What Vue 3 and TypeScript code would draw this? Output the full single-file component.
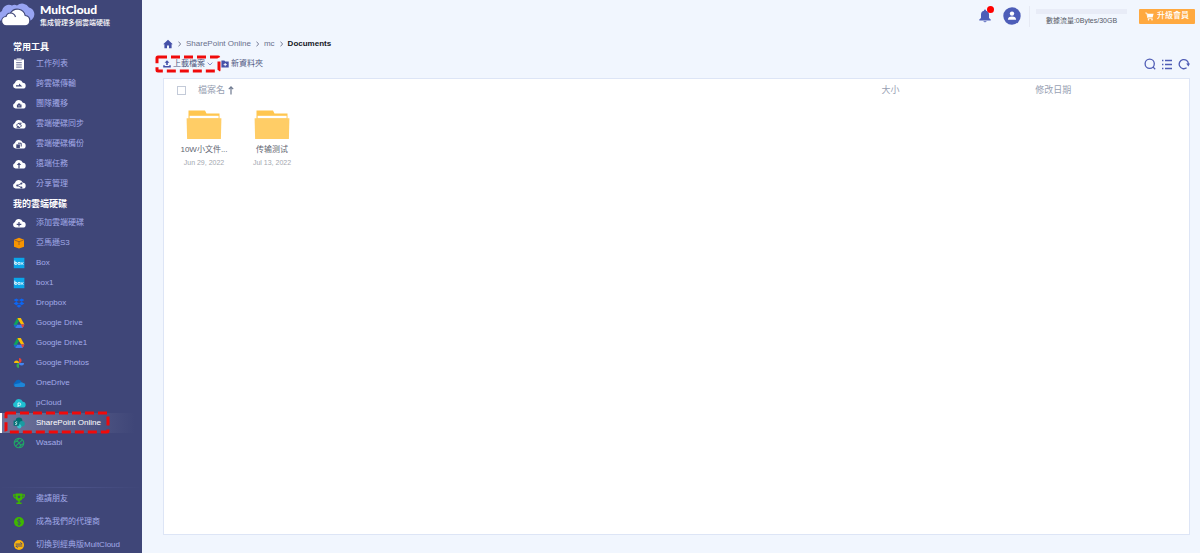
<script setup lang="ts">
interface Shape {
  d: string
  fill?: string
  stroke?: string
  w?: number
}
interface Item {
  label: string
  icon: Shape[]
  active?: boolean
}

const bg = '#3f4678'
const cloud: Shape = {
  d: 'M3.6 11.6A2.9 2.9 0 0 1 2.9 6A4.2 4.2 0 0 1 10.8 5.8A2.9 2.9 0 0 1 10.8 11.6Z',
  fill: '#fff',
}
const line = (d: string, stroke = bg, w = 1): Shape => ({ d, stroke, w })
const solid = (d: string, fill = bg): Shape => ({ d, fill })

const boxIcon: Shape[] = [
  solid('M1.8 1.8H12.4V12.2H1.8Z', '#0ba5e9'),
  line('M2.8 4.6V8.4M2.8 7.4A1.1 1.1 0 1 0 5 7.4A1.1 1.1 0 1 0 2.8 7.4M5.9 7.4A1.1 1.1 0 1 0 8.1 7.4A1.1 1.1 0 1 0 5.9 7.4M8.8 6.2L11.3 8.8M11.3 6.2L8.8 8.8', '#fff', 0.9),
]
const driveIcon: Shape[] = [
  solid('M5.2 2H8.8L12.4 8.6H8.9Z', '#fbbc04'),
  solid('M5.2 2L7 5.2L3.3 12L1.6 8.8Z', '#0fa45c'),
  solid('M5.2 8.6H12.4L10.7 12H3.3Z', '#3b7ded'),
  solid('M1.6 8.8L3.3 12L5.1 8.7Z', '#1967d2'),
  solid('M12.4 8.6L10.7 12L8.9 8.6Z', '#ea4335'),
  solid('M7 5.3L8.8 8.6H5.2Z', bg),
]

const tools: Item[] = [
  {
    label: '工作列表',
    icon: [
      solid('M2 2.4H4.6V1.4H9.4V2.4H12V12.4H2Z', '#fff'),
      line('M4.2 3H9.8', bg, 0.6),
      line('M4.2 5.7H9.8M4.2 7.9H9.8M4.2 10.1H9.8', bg, 0.8),
    ],
  },
  { label: '跨雲碟傳輸', icon: [cloud, solid('M4 9.6V8.3H7V6.6L10.3 9.6Z')] },
  { label: '團隊遷移', icon: [cloud, solid('M4.9 10.4V7.4H6V6.6H8.2V7.4H9.5V10.4Z'), line('M6 8.9H8.4', '#fff', 0.5)] },
  { label: '雲端硬碟同步', icon: [cloud, line('M4.9 8.8A2.2 2.2 0 0 1 8.4 6.7M9.2 8A2.2 2.2 0 0 1 5.7 10.1M8.9 5.6V7.3H7.2M5.2 11.1V9.5H6.8')] },
  { label: '雲端硬碟備份', icon: [cloud, solid('M4.3 7.4H7.9V11H4.3Z'), line('M6 6.2H9.2V9.5')] },
  { label: '遠端任務', icon: [cloud, solid('M7 5.5L9.2 8H7.6V11.6H6.4V8H4.8Z')] },
  { label: '分享管理', icon: [cloud, line('M9.3 6.6L5.2 8.5L9.3 10.4', bg, 0.8), solid('M8.4 6.5A1 1 0 1 0 10.4 6.5A1 1 0 1 0 8.4 6.5M4.2 8.5A1 1 0 1 0 6.2 8.5A1 1 0 1 0 4.2 8.5M8.4 10.4A1 1 0 1 0 10.4 10.4A1 1 0 1 0 8.4 10.4')] },
]

const drives: Item[] = [
  { label: '添加雲端硬碟', icon: [cloud, line('M7 6V10.6M4.7 8.3H9.3', bg, 1.2)] },
  {
    label: '亞馬遜S3',
    icon: [
      solid('M7 1.8L12 3.7V10.8L7 12.6L2 10.8V3.7Z', '#f79400'),
      line('M2.4 4L7 5.7L11.6 4M7 5.7V9', '#8a5a34', 0.8),
    ],
  },
  { label: 'Box', icon: boxIcon },
  { label: 'box1', icon: boxIcon },
  {
    label: 'Dropbox',
    icon: [solid('M4.3 2.4L7 4.1L4.3 5.8L1.6 4.1ZM9.7 2.4L12.4 4.1L9.7 5.8L7 4.1ZM4.3 5.8L7 7.5L4.3 9.2L1.6 7.5ZM9.7 5.8L12.4 7.5L9.7 9.2L7 7.5ZM7 8.5L9.6 10.1L7 11.8L4.4 10.1Z', '#0d66f2')],
  },
  { label: 'Google Drive', icon: driveIcon },
  { label: 'Google Drive1', icon: driveIcon },
  {
    label: 'Google Photos',
    icon: [
      solid('M7 7V2A2.5 2.5 0 0 1 7 7Z', '#ea4335'),
      solid('M7 7H2A2.5 2.5 0 0 1 7 7Z', '#fbbc04'),
      solid('M7 7V12A2.5 2.5 0 0 1 7 7Z', '#34a853'),
      solid('M7 7H12A2.5 2.5 0 0 1 7 7Z', '#4285f4'),
    ],
  },
  {
    label: 'OneDrive',
    icon: [
      solid('M4 10.8A2.4 2.4 0 0 1 3 6.2A3.4 3.4 0 0 1 9.4 5.8L8 10.8Z', '#0a66c0'),
      solid('M3.6 11A2 2 0 0 1 2.6 8.2L7.5 7.2A3 3 0 0 1 11.2 7A2 2 0 0 1 11.2 11Z', '#1d86d8'),
    ],
  },
  {
    label: 'pCloud',
    icon: [
      { d: cloud.d, fill: '#1fbfd2' },
      line('M6 11V7H7.4A1.3 1.3 0 0 1 7.4 9.6H6', '#d9fbff', 0.9),
    ],
  },
  {
    label: 'SharePoint Online',
    active: true,
    icon: [
      solid('M3.6 5A3.4 3.4 0 1 1 10.4 5A3.4 3.4 0 1 1 3.6 5', '#036c70'),
      solid('M7.2 7.8A2.8 2.8 0 1 1 12.8 7.8A2.8 2.8 0 1 1 7.2 7.8', '#1a9ba1'),
      solid('M5.2 10.4A2.1 2.1 0 1 1 9.4 10.4A2.1 2.1 0 1 1 5.2 10.4', '#37c6d0'),
      solid('M1.6 4.6H6.8V9.8H1.6Z', '#027478'),
      line('M5.2 6A1 .7 0 1 0 4.2 7.2A1 .7 0 1 1 3.2 8.4', '#fff', 0.8),
    ],
  },
  {
    label: 'Wasabi',
    icon: [
      line('M2.2 7A4.8 4.8 0 1 1 11.8 7A4.8 4.8 0 1 1 2.2 7M2.4 6.6L5 4.8L7.2 6.8L10.4 3.8M11.6 7.4L9 9.2L6.8 7.2L3.6 10.2M7 2.4L5 4.8M7 11.6L9 9.2', '#1fa866', 1.1),
    ],
  },
]

const extras: Item[] = [
  {
    label: '邀請朋友',
    icon: [
      solid('M3.6 1.6H10.4V5.4A3.4 3.4 0 0 1 3.6 5.4ZM6.2 8H7.8V10.4H9.6V12H4.4V10.4H6.2Z', '#3fb800'),
      line('M3.8 2.9H1.6A3 3 0 0 0 4.4 6.3M10.2 2.9H12.4A3 3 0 0 1 9.6 6.3', '#3fb800', 1.1),
      solid('M7 3L7.6 4.2L8.8 4.4L7.9 5.2L8.1 6.4L7 5.8L5.9 6.4L6.1 5.2L5.2 4.4L6.4 4.2Z'),
    ],
  },
  {
    label: '成為我們的代理商',
    icon: [
      solid('M2 7A5 5 0 1 1 12 7A5 5 0 1 1 2 7', '#3fb800'),
      line('M8.5 5.4A1.5 1.2 0 1 0 7 7A1.5 1.2 0 1 1 5.5 8.6M7 3.4V10.6', bg, 0.8),
    ],
  },
  {
    label: '切換到經典版MultCloud',
    icon: [
      solid('M2 7A5 5 0 1 1 12 7A5 5 0 1 1 2 7', '#fbb40c'),
      line('M3.6 6.1H10.2L8.4 4.2M10.4 8H3.8L5.6 9.8', bg, 0.9),
    ],
  },
]

const groups = [
  { title: '常用工具', items: tools },
  { title: '我的雲端硬碟', items: drives },
]

const folders = [
  { name: '10W小文件...', date: 'Jun 29, 2022' },
  { name: '传输测试', date: 'Jul 13, 2022' },
]
</script>

<template>
  <div class="app">
    <aside class="sidebar">
      <a class="brand" href="#">
        <svg class="logo" viewBox="0 0 36 26" aria-hidden="true">
          <path d="M3 19A6 6 0 0 1 2 8A7 7 0 0 1 12 2.5A5.500 5.500 0 0 1 17 2.500A8 8 0 0 1 29 4.500A7 7 0 0 1 32 16.500L28 19Z" fill="#98a4f2" />
          <path d="M6.500 22.800A4.600 4.600 0 0 1 6 13.500A5 5 0 0 1 10.500 10A8 8 0 0 1 25.200 12.500A5.200 5.200 0 0 1 25.500 22.800Z" fill="#fff" stroke="#3f4678" stroke-width="1.2" />
          <path d="M10.500 10A5.500 5.500 0 0 1 15.500 14" fill="none" stroke="#3f4678" stroke-width="1.2" />
        </svg>
        <span class="brand-text">
          <strong>MultCloud</strong>
          <small>集成管理多個雲端硬碟</small>
        </span>
      </a>

      <nav class="nav">
        <section v-for="group in groups" :key="group.title">
          <h2>{{ group.title }}</h2>
          <ul>
            <li v-for="item in group.items" :key="item.label">
              <a href="#" class="item" :class="{ active: item.active }">
                <svg class="icon" viewBox="0 0 14 14" aria-hidden="true">
                  <path v-for="(s, i) in item.icon" :key="i" :d="s.d" :fill="s.fill ?? 'none'" :stroke="s.stroke ?? 'none'" :stroke-width="s.w" />
                </svg>
                <span>{{ item.label }}</span>
                <svg v-if="item.active" class="mark mark-drive" aria-hidden="true">
                  <rect x="2" y="2" width="102" height="19" rx="1" />
                </svg>
              </a>
            </li>
          </ul>
        </section>
      </nav>

      <ul class="extras">
        <li v-for="item in extras" :key="item.label">
          <a href="#" class="item">
            <svg class="icon" viewBox="0 0 14 14" aria-hidden="true">
              <path v-for="(s, i) in item.icon" :key="i" :d="s.d" :fill="s.fill ?? 'none'" :stroke="s.stroke ?? 'none'" :stroke-width="s.w" />
            </svg>
            <span>{{ item.label }}</span>
          </a>
        </li>
      </ul>
    </aside>

    <main class="main">
      <header class="topbar">
        <button class="bell" aria-label="Notifications">
          <svg viewBox="0 0 12 14" width="12" height="14" aria-hidden="true">
            <path d="M6 0.6A1 1 0 0 1 7 1.7A4 4 0 0 1 10 5.6V9L11.7 10.4V11.5H0.3V10.4L2 9V5.6A4 4 0 0 1 5 1.7A1 1 0 0 1 6 0.6ZM4.3 12.2H7.7A1.8 1.5 0 0 1 4.3 12.2Z" fill="#4d5db8" />
          </svg>
          <span class="dot"></span>
        </button>
        <button class="avatar" aria-label="Account">
          <svg viewBox="0 0 18 18" width="18" height="18" aria-hidden="true">
            <circle cx="9" cy="9" r="8.7" fill="#4d5db8" />
            <circle cx="9" cy="6.6" r="2.2" fill="#fff" />
            <path d="M4.9 12.8A4.1 3.4 0 0 1 13.1 12.8Z" fill="#fff" />
          </svg>
        </button>
        <div class="traffic">
          <div class="bar"></div>
          <span>數據流量:0Bytes/30GB</span>
        </div>
        <button class="upgrade">
          <svg viewBox="0 0 9 9" width="9" height="9" aria-hidden="true">
            <path d="M0.3 1H1.8L2.9 6.2H7.6" fill="none" stroke="#fff" stroke-width="0.9" />
            <path d="M2 1.7H8.6L7.7 5.3H2.8Z" fill="#fff" />
            <circle cx="3.5" cy="7.7" r="0.8" fill="#fff" />
            <circle cx="7" cy="7.7" r="0.8" fill="#fff" />
          </svg>
          升級會員
        </button>
      </header>

      <nav class="crumbs" aria-label="Breadcrumb">
        <a href="#" aria-label="Home">
          <svg viewBox="0 0 10 10" width="10" height="10" aria-hidden="true">
            <path d="M5 0.8L9.8 5.2H8.6V9.2H6V6.5H4V9.2H1.4V5.2H0.2Z" fill="#4450a8" />
          </svg>
        </a>
        <svg class="sep" viewBox="0 0 3 6" aria-hidden="true"><path d="M0.5 0.6L2.6 3L0.5 5.4" /></svg>
        <a href="#">SharePoint Online</a>
        <svg class="sep" viewBox="0 0 3 6" aria-hidden="true"><path d="M0.5 0.6L2.6 3L0.5 5.4" /></svg>
        <a href="#">mc</a>
        <svg class="sep" viewBox="0 0 3 6" aria-hidden="true"><path d="M0.5 0.6L2.6 3L0.5 5.4" /></svg>
        <strong>Documents</strong>
      </nav>

      <div class="toolbar">
        <button class="upload">
          <svg viewBox="0 0 8 8" width="8" height="8" aria-hidden="true">
            <path d="M4 0.2L6.4 2.8H4.8V5H3.2V2.8H1.6ZM0.2 5.2H1.8V6H6.2V5.2H7.8V7.6H0.2Z" fill="#4450a8" />
          </svg>
          上載檔案
          <svg viewBox="0 0 6 4" width="6" height="4" aria-hidden="true">
            <path d="M0.6 0.6L3 3L5.4 0.6" fill="none" stroke="#6f79bd" stroke-width="0.8" />
          </svg>
          <svg class="mark mark-upload" aria-hidden="true">
            <rect x="2" y="2" width="62" height="14" rx="1" />
          </svg>
        </button>
        <button>
          <svg viewBox="0 0 8 8" width="8" height="8" aria-hidden="true">
            <path d="M0.4 0.5H3.4L4.2 1.6H7.7V7.5H0.4Z" fill="#4450a8" />
            <path d="M4.2 3V6.2M2.6 4.6H5.8" stroke="#fff" stroke-width="0.9" />
          </svg>
          新資料夾
        </button>
        <div class="views">
          <button aria-label="Search">
            <svg viewBox="0 0 12 12" width="12" height="12" aria-hidden="true">
              <circle cx="5.7" cy="5.7" r="4.6" /><path d="M8.9 8.9L11.2 11.2" />
            </svg>
          </button>
          <button aria-label="List view">
            <svg viewBox="0 0 12 12" width="12" height="12" aria-hidden="true">
              <path d="M1 2.5H2.4M4 2.5H11M1 6.5H2.4M4 6.5H11M1 10.5H2.4M4 10.5H11" />
            </svg>
          </button>
          <button aria-label="Refresh">
            <svg viewBox="0 0 12 12" width="12" height="12" aria-hidden="true">
              <path d="M8.6 9.8A4.6 4.6 0 1 1 10.4 6.2" /><path class="tip" d="M8.2 5.6H12L10.400 8.600Z" />
            </svg>
          </button>
        </div>
      </div>

      <section class="panel">
        <div class="columns">
          <div class="col-name">
            <input type="checkbox" aria-label="Select all" />
            <button>
              檔案名
              <svg viewBox="0 0 6 9" width="6" height="9" aria-hidden="true">
                <path d="M3 8.6V1M0.8 3.2L3 0.9L5.2 3.2" fill="none" stroke="#6f7a90" stroke-width="1.2" />
              </svg>
            </button>
          </div>
          <div><button>大小</button></div>
          <div><button>修改日期</button></div>
        </div>
        <ul class="files">
          <li v-for="f in folders" :key="f.name">
            <a href="#">
              <svg viewBox="0 0 36 30" width="36" height="30" aria-hidden="true">
                <path d="M2.5 0.5H19L20.5 3.5H33.5V12H2.5Z" fill="#ffc64f" />
                <path d="M3.6 5.8H32.6V8.5H3.6Z" fill="#fff" />
                <path d="M0.6 8.3H35.400L34.900 29H1.100Z" fill="#ffcd66" />
              </svg>
              <span class="name">{{ f.name }}</span>
              <time>{{ f.date }}</time>
            </a>
          </li>
        </ul>
      </section>
    </main>
  </div>
</template>

<style>
body {
  margin: 0;
}
</style>

<style scoped>
.app {
  display: flex;
  min-height: 100vh;
  font-family: 'Liberation Sans', 'Noto Sans CJK TC', sans-serif;
  font-size: 8px;
  line-height: 12px;
  background: #f1f6fe;
}
ul {
  list-style: none;
  margin: 0;
  padding: 0;
}
a {
  color: inherit;
  text-decoration: none;
}
button {
  display: inline-flex;
  align-items: center;
  padding: 0;
  border: 0;
  background: none;
  font: inherit;
  color: inherit;
  cursor: pointer;
}
svg {
  display: block;
  flex: none;
}

.sidebar {
  display: flex;
  flex-direction: column;
  flex: none;
  width: 142px;
  background: #3f4678;
  color: #a3abe8;
}
.brand {
  display: flex;
  gap: 4px;
  height: 33px;
  padding-top: 3px;
  box-sizing: border-box;
  color: #fff;
}
.logo {
  width: 36px;
  height: 26px;
}
.brand-text {
  display: flex;
  flex-direction: column;
}
.brand-text strong {
  font-family: Lato, sans-serif;
  font-size: 12px;
  font-weight: 900;
  line-height: 14px;
}
.brand-text small {
  font-size: 7px;
  font-weight: 500;
  line-height: 11px;
  white-space: nowrap;
}
.nav h2 {
  margin: 0;
  padding-left: 13px;
  font-size: 9px;
  line-height: 20px;
  height: 19px;
  color: #fff;
}
.nav section:first-child {
  padding-top: 4px;
}
.nav section:first-child h2 {
  height: 17px;
}
.item {
  position: relative;
  display: flex;
  align-items: center;
  gap: 10px;
  height: 20px;
  padding-left: 12px;
  white-space: nowrap;
}
.icon {
  width: 14px;
  height: 14px;
}
.item.active {
  color: #fff;
  background: linear-gradient(90deg, #70759b, #3f4678 95%);
  box-shadow: inset 2px 0 #fff;
}
.extras {
  display: flex;
  flex-direction: column;
  gap: 7px;
  margin-top: auto;
  padding-top: 4px;
  background: linear-gradient(90deg, #3f4678, #4c5389 50%, #3f4678) top / 100% 1px no-repeat;
}
.extras .item {
  height: 16px;
}

.mark {
  position: absolute;
  fill: none;
  stroke: #f00a0a;
  stroke-width: 3;
  stroke-dasharray: 9 4;
  pointer-events: none;
}
.mark-drive {
  left: 4px;
  top: -2px;
  width: 106px;
  height: 23px;
}
.mark-upload {
  left: -8px;
  top: -3px;
  width: 66px;
  height: 18px;
}

.main {
  display: flex;
  flex-direction: column;
  flex: 1;
  min-width: 0;
  padding: 0 10px 18px 21px;
}
.topbar {
  display: flex;
  align-items: center;
  justify-content: flex-end;
  height: 32px;
  margin-right: -5px;
}
.bell {
  position: relative;
}
.dot {
  position: absolute;
  top: -3px;
  right: -3px;
  width: 7px;
  height: 7px;
  border-radius: 50%;
  background: #f00;
}
.avatar {
  margin-left: 12px;
}
.traffic {
  display: flex;
  flex-direction: column;
  align-items: center;
  gap: 1px;
  width: 91px;
  margin-left: 8px;
  padding: 3px 12px 0 6px;
  border-left: 1px solid #e6eaf4;
  font-size: 7px;
  color: #555a66;
  white-space: nowrap;
}
.bar {
  width: 100%;
  height: 5px;
  background: #e8ecf7;
}
.upgrade {
  gap: 3px;
  height: 15px;
  padding: 0 6px;
  border-radius: 1px;
  background: #ffa940;
  color: #fff;
  font-weight: 500;
  white-space: nowrap;
}
.crumbs {
  display: flex;
  align-items: center;
  gap: 5px;
  height: 24px;
  color: #69708c;
}
.sep {
  width: 3px;
  height: 6px;
  fill: none;
  stroke: #6b728c;
  stroke-width: 0.9;
}
.crumbs strong {
  color: #14161f;
}
.toolbar {
  display: flex;
  align-items: center;
  gap: 8px;
  height: 16px;
  margin-bottom: 6px;
  color: #4e5680;
}
.toolbar button {
  gap: 2px;
}
.upload {
  position: relative;
}
.views {
  display: flex;
  gap: 5px;
  margin-left: auto;
}
.views svg {
  fill: none;
  stroke: #4f5cb5;
  stroke-width: 1.3;
}
.views .tip {
  fill: #4f5cb5;
  stroke: none;
}
.panel {
  flex: 1;
  border: 1px solid #dde5f6;
  background: #fff;
}
.columns {
  display: grid;
  grid-template-columns: 70% 15% 15%;
  align-items: center;
  height: 22px;
  font-size: 9px;
  color: #98a1b3;
}
.col-name {
  display: flex;
  align-items: center;
  gap: 12px;
  padding-left: 13px;
}
.col-name button {
  gap: 3px;
}
.col-name input {
  appearance: none;
  width: 9px;
  height: 9px;
  margin: 0;
  border: 1px solid #c3cad8;
  background: #fff;
}
.files {
  display: flex;
  padding: 9px 6px;
}
.files li {
  width: 68px;
}
.files a {
  display: flex;
  flex-direction: column;
  align-items: center;
}
.name {
  margin-top: 3px;
  line-height: 13px;
  color: #5e6470;
}
time {
  font-size: 7px;
  line-height: 13px;
  color: #a4a8b0;
}
</style>
